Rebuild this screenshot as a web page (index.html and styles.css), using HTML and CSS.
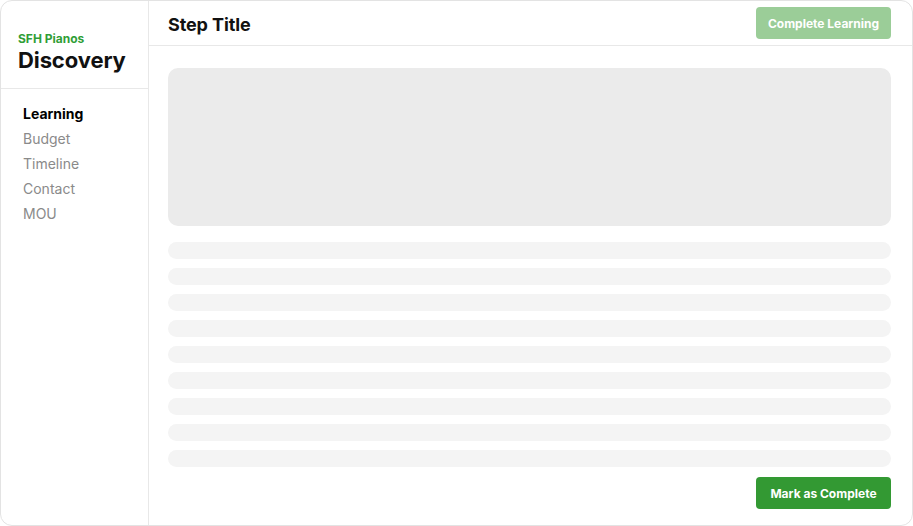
FILE: index.html
```html
<!DOCTYPE html>
<html lang="en">
<head>
<meta charset="utf-8">
<title>Discovery</title>
<link rel="stylesheet" href="styles.css">
</head>
<body>
<div class="card">
  <aside class="sidebar">
    <div class="brand">
      <div class="brand-small">SFH Pianos</div>
      <div class="brand-title">Discovery</div>
    </div>
    <nav class="nav">
      <a class="nav-item active">Learning</a>
      <a class="nav-item">Budget</a>
      <a class="nav-item">Timeline</a>
      <a class="nav-item">Contact</a>
      <a class="nav-item">MOU</a>
    </nav>
  </aside>
  <main class="main">
    <header class="header">
      <h1 class="title">Step Title</h1>
      <button class="btn btn-light">Complete Learning</button>
    </header>
    <section class="content">
      <div class="hero"></div>
      <div class="lines">
        <div class="line"></div>
        <div class="line"></div>
        <div class="line"></div>
        <div class="line"></div>
        <div class="line"></div>
        <div class="line"></div>
        <div class="line"></div>
        <div class="line"></div>
        <div class="line"></div>
      </div>
      <div class="footer">
        <button class="btn btn-primary">Mark as Complete</button>
      </div>
    </section>
  </main>
</div>
</body>
</html>
```

FILE: styles.css
```css
* { box-sizing: border-box; }
html, body { margin: 0; padding: 0; background: #fff; }
body {
  font-family: Inter, "Noto Sans", sans-serif;
  color: #111;
}
.card {
  width: 913px;
  height: 526px;
  border: 1px solid #e3e3e3;
  border-radius: 12px;
  display: flex;
  overflow: hidden;
  background: #fff;
}
.sidebar {
  width: 148px;
  flex: none;
  border-right: 1px solid #e8e8e8;
  display: flex;
  flex-direction: column;
}
.brand {
  height: 88px;
  border-bottom: 1px solid #e8e8e8;
  padding: 30px 0 0 17px;
}
.brand-small {
  font-size: 12px;
  font-weight: 700;
  color: #2f9e36;
  line-height: 15px;
}
.brand-title {
  margin-top: 1px;
  font-size: 22px;
  font-weight: 700;
  color: #111;
  line-height: 27px;
  letter-spacing: -0.1px;
}
.nav {
  display: flex;
  flex-direction: column;
  padding: 12px 0 0 22px;
}
.nav-item {
  font-size: 14px;
  line-height: 25px;
  color: #8a8a8a;
}
.nav-item.active {
  color: #000;
  font-weight: 700;
}
.main {
  flex: 1;
  display: flex;
  flex-direction: column;
}
.header {
  height: 45px;
  border-bottom: 1px solid #e8e8e8;
  display: flex;
  align-items: center;
  justify-content: space-between;
  padding: 0 21px 0 19px;
}
.title {
  margin: 2px 0 0;
  font-size: 18px;
  font-weight: 700;
  color: #111;
  letter-spacing: -0.1px;
}
.btn {
  font-family: inherit;
  border: none;
  border-radius: 4px;
  height: 32px;
  width: 135px;
  font-size: 12px;
  font-weight: 700;
  color: #fff;
  padding: 1px 0 0;
}
.btn-light { background: #9bcd98; }
.btn-primary { background: #339933; }
.content {
  flex: 1;
  padding: 22px 21px 15px 19px;
  display: flex;
  flex-direction: column;
}
.hero {
  height: 158px;
  background: #ebebeb;
  border-radius: 10px;
}
.lines {
  margin-top: 16px;
  display: flex;
  flex-direction: column;
  gap: 9px;
}
.line {
  height: 17px;
  background: #f4f4f4;
  border-radius: 9px;
}
.footer {
  margin-top: 10px;
  display: flex;
  justify-content: flex-end;
}
```
